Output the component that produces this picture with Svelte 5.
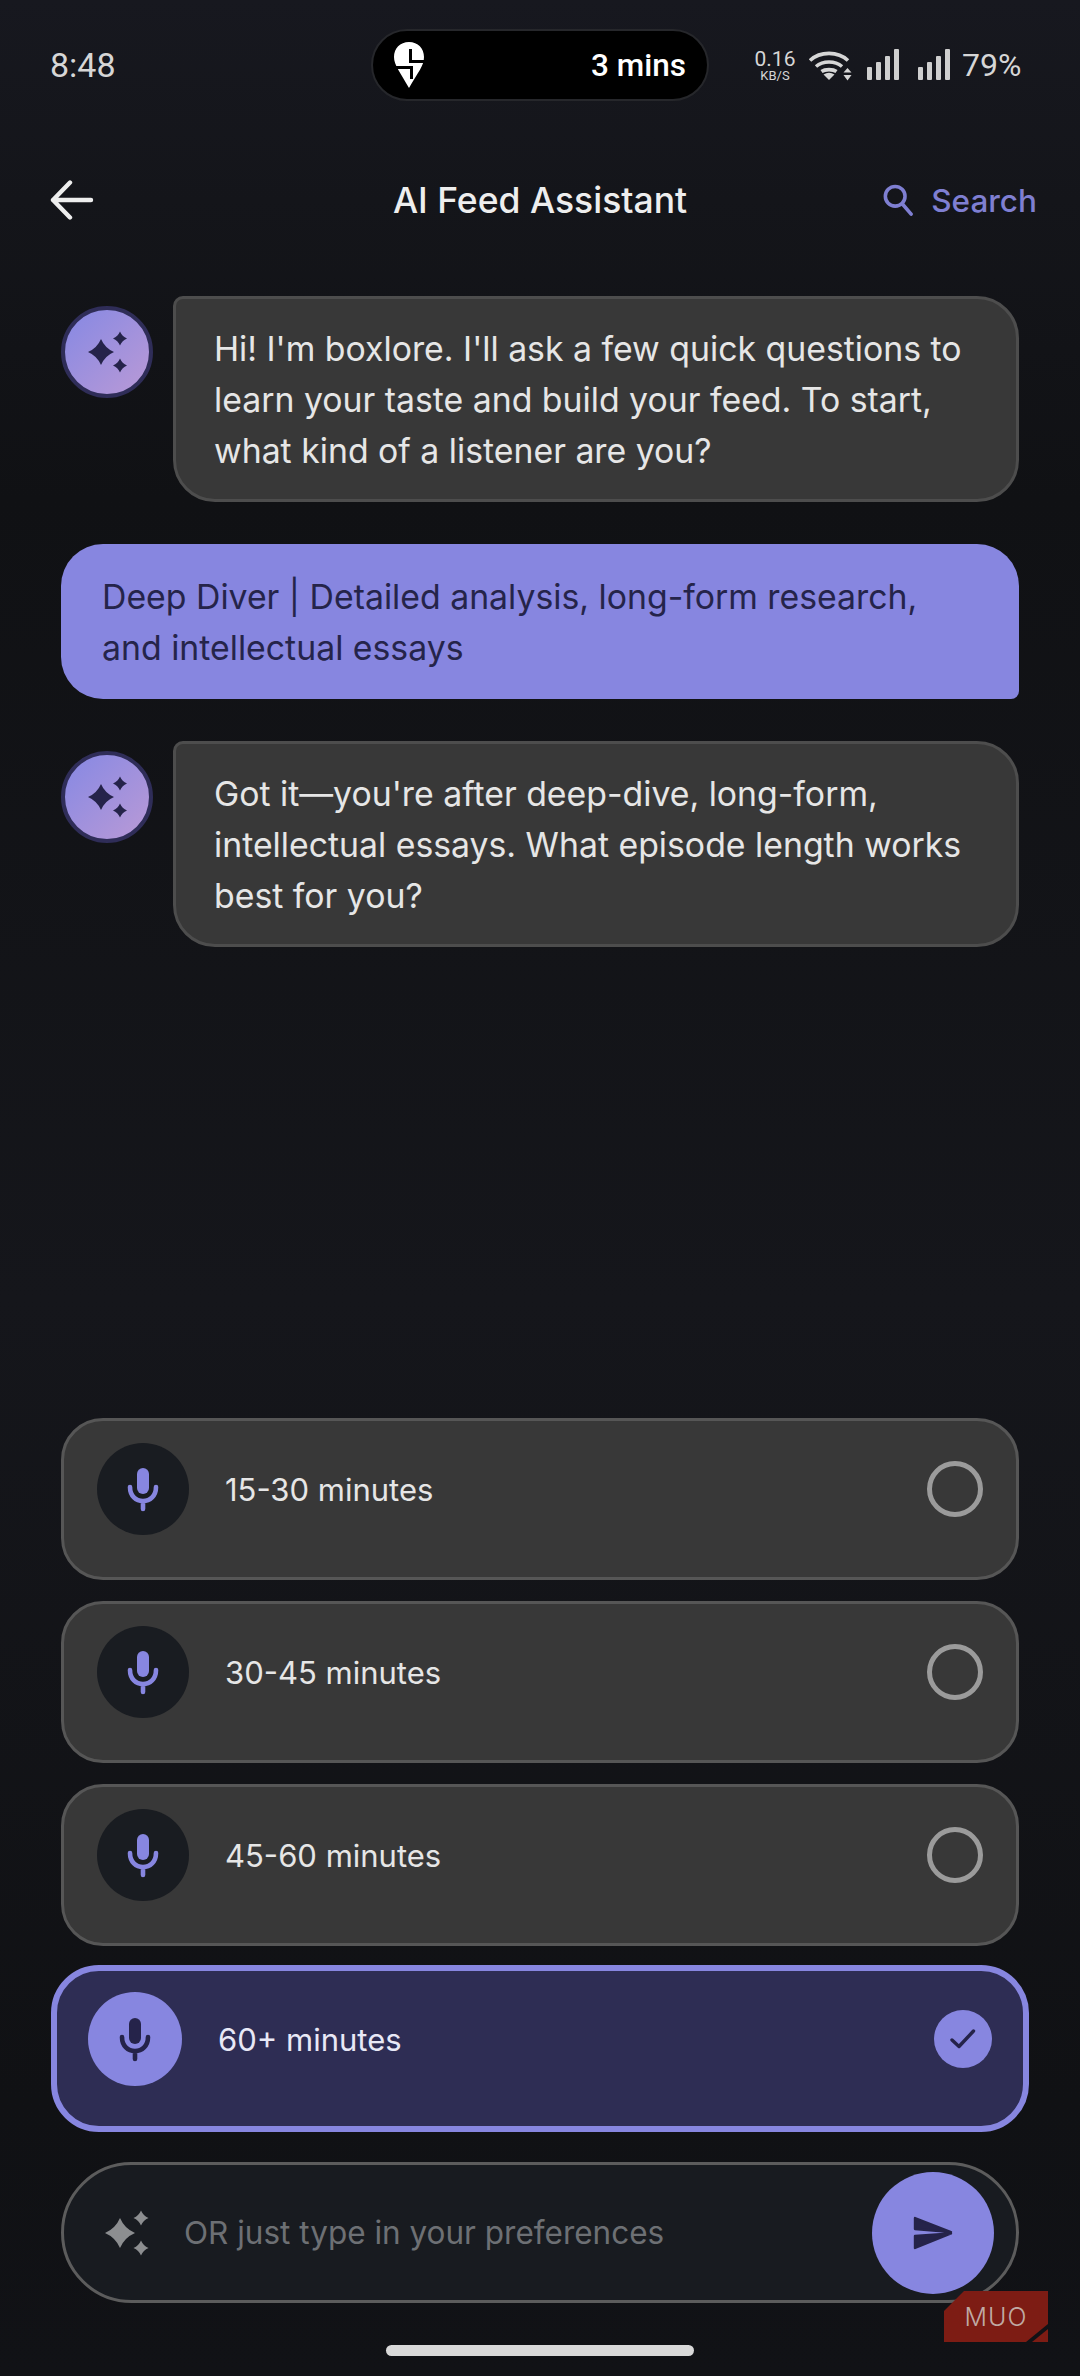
<script>
  const options = ["15-30 minutes", "30-45 minutes", "45-60 minutes", "60+ minutes"];
  let selected = $state(3);

  // four point star, r is the tip distance
  function star(cx, cy, r) {
    const k = r * 0.3;
    return `M${cx} ${cy - r}Q${cx + k} ${cy - k} ${cx + r} ${cy}Q${cx + k} ${cy + k} ${cx} ${cy + r}Q${cx - k} ${cy + k} ${cx - r} ${cy}Q${cx - k} ${cy - k} ${cx} ${cy - r}Z`;
  }
</script>

{#snippet mic()}
  <svg class="mic" viewBox="0 0 48 48" fill="none" stroke="currentColor">
    <rect x="18" y="3" width="12" height="26" rx="6" fill="currentColor" stroke="none" />
    <path d="M11 22C11 31 17 36 24 36S37 31 37 22M24 36V44" stroke-width="4.6" stroke-linecap="round" />
  </svg>
{/snippet}

{#snippet sparkle(size, big)}
  <svg width={size} height={size} viewBox="0 0 60 60" fill="currentColor">
    <path d={star(big, 30, big - 7)} />
    <path d={star(big + 21, 15, 7.5)} />
    <path d={star(big + 21, 45, 7.5)} />
  </svg>
{/snippet}

{#snippet avatar()}
  <div class="avatar">
    <svg width="84" height="84" viewBox="0 0 84 84" fill="#25234a">
      <path d={star(36, 42, 13)} />
      <path d={star(55, 28.5, 7)} />
      <path d={star(55, 55.5, 7)} />
    </svg>
  </div>
{/snippet}

<main class="page">
  <div class="status">
    <span class="time">8:48</span>
    <div class="pill">
      <svg width="32" height="48" viewBox="0 0 32 48">
        <path d="M16 1C7 1 1 7.500 1 16C1 24 7 31 16 47C25 31 31 25 31 16C31 7.500 25 1 16 1Z" fill="#fff" />
        <path d="M17.500 8V20.500H31M0 26.500H18.500V38" fill="none" stroke="#000" stroke-width="3" />
      </svg>
      <span class="eta">3 mins</span>
    </div>
    <div class="net">
      <div class="speed"><span>0.16</span><small>KB/S</small></div>
      <svg class="wifi" width="44" height="32" viewBox="0 0 44 32" fill="none" stroke="#d6d6d6" stroke-width="3.600">
        <path d="M1 11.500C11 2 29 2 39 11.500M7 17.500C14 11.500 26 11.500 33 17.500M12.500 22.500C16 20 24 20 27.500 22.500" />
        <path d="M14.500 25.500L20 31L25.500 25.500Q20 22 14.500 25.500Z" fill="#d6d6d6" stroke="none" />
        <path d="M38.500 19L42.500 23.500H34.500ZM38.500 31.500L42.500 26H34.500Z" fill="#d6d6d6" stroke="none" />
      </svg>
      <svg class="bars" width="32" height="32" viewBox="0 0 32 32" fill="#cfcfcf">
        <rect x="0" y="18" width="5" height="13" rx="1" /><rect x="9" y="13" width="5" height="18" rx="1" />
        <rect x="18" y="7" width="5" height="24" rx="1" /><rect x="27" y="0" width="5" height="31" rx="1" />
      </svg>
      <svg class="bars" width="32" height="32" viewBox="0 0 32 32" fill="#cfcfcf">
        <rect x="0" y="18" width="5" height="13" rx="1" /><rect x="9" y="13" width="5" height="18" rx="1" />
        <rect x="18" y="7" width="5" height="24" rx="1" /><rect x="27" y="0" width="5" height="31" rx="1" />
      </svg>
      <span class="batt">79%</span>
    </div>
  </div>

  <header class="nav">
    <svg width="44" height="40" viewBox="0 0 44 40" fill="none" stroke="#eee" stroke-width="4.400" stroke-linecap="round" stroke-linejoin="round">
      <path d="M20 2.500L3 20L20 37.500M3 20H41" />
    </svg>
    <h1>AI Feed Assistant</h1>
    <div class="search">
      <svg width="30" height="32" viewBox="0 0 32 34" fill="none" stroke="currentColor" stroke-width="3.800" stroke-linecap="round">
        <circle cx="13" cy="13" r="10.500" /><path d="M20.500 21L30 32" />
      </svg>
      <span>Search</span>
    </div>
  </header>

  <section class="chat">
    <div class="bot">
      {@render avatar()}
      <p class="bubble">Hi! I'm boxlore. I'll ask a few quick questions to learn your taste and build your feed. To start, what kind of a listener are you?</p>
    </div>
    <p class="user">Deep Diver | Detailed analysis, long-form research, and intellectual essays</p>
    <div class="bot">
      {@render avatar()}
      <p class="bubble">Got it—you're after deep-dive, long-form, intellectual essays. What episode length works best for you?</p>
    </div>
  </section>

  <section class="options">
    {#each options as label, i}
      <button class="opt" class:on={selected === i} onclick={() => (selected = i)}>
        <span class="micwrap">{@render mic()}</span>
        <span class="label">{label}</span>
        {#if selected === i}
          <span class="tick">
            <svg width="30" height="30" viewBox="0 0 30 30" fill="none" stroke="#25234a" stroke-width="3.400" stroke-linecap="round" stroke-linejoin="round">
              <path d="M4 16L11 22.500L25.500 7" />
            </svg>
          </span>
        {:else}
          <span class="radio"></span>
        {/if}
      </button>
    {/each}
  </section>

  <div class="inputbar">
    <span class="inicon">{@render sparkle(60, 22)}</span>
    <span class="placeholder">OR just type in your preferences</span>
    <button class="send" aria-label="Send">
      <svg width="40" height="34" viewBox="0 0 40 34" fill="#25234a" stroke="#25234a" stroke-width="2.400" stroke-linejoin="round">
        <path d="M2 2L38 16L2 13ZM2 20L38 17.500L2 32Z" />
      </svg>
    </button>
  </div>

  <div class="home"></div>

  <div class="badge"><span>MUO</span></div>
</main>

<style>
  :global(body) {
    margin: 0;
    background: #111216;
  }

  .page {
    position: relative;
    width: 1080px;
    height: 2376px;
    display: flex;
    flex-direction: column;
    overflow: hidden;
    box-sizing: border-box;
    background: linear-gradient(180deg, #17181f 0, #14151a 200px, #101114 500px, #15161b 1300px, #101114 2100px, #111216 100%);
    font-family: Inter, "Noto Sans", sans-serif;
    color: #e6e6e6;
  }

  /* status bar */
  .status {
    height: 72px;
    margin-top: 29px;
    padding-left: 50px;
    display: flex;
    align-items: center;
    font-family: Roboto, sans-serif;
    color: #d6d6d6;
  }

  .time {
    width: 321px;
    font-size: 34px;
  }

  .pill {
    width: 338px;
    height: 72px;
    box-sizing: border-box;
    border: 2px solid #26272b;
    border-radius: 36px;
    background: #000;
    display: flex;
    align-items: center;
    justify-content: space-between;
    padding: 0 21px 0 20px;
  }

  .eta {
    font-size: 31.500px;
    font-weight: 500;
    color: #fff;
  }

  .net {
    margin-left: 44px;
    display: flex;
    align-items: center;
  }

  .speed {
    display: flex;
    flex-direction: column;
    align-items: center;
    width: 44px;
    line-height: 1;
    font-size: 21px;
    margin-right: 12px;
  }

  .speed small {
    font-size: 13px;
    margin-top: -1px;
  }

  .wifi {
    margin-right: 14px;
  }

  .bars {
    margin-right: 19px;
  }

  .bars + .batt {
    margin-left: -7px;
  }

  .batt {
    font-size: 32px;
  }

  /* nav */
  .nav {
    position: relative;
    height: 64px;
    margin-top: 67px;
    padding: 0 43px 0 50px;
    display: flex;
    align-items: center;
    justify-content: space-between;
  }

  .nav h1 {
    position: absolute;
    left: 0;
    right: 0;
    margin: 0;
    text-align: center;
    font-size: 35.500px;
    font-weight: 500;
    color: #eee;
    pointer-events: none;
  }

  .search {
    display: flex;
    align-items: center;
    gap: 18px;
    color: #7f7fd2;
    font-size: 31.500px;
    font-weight: 500;
  }

  /* chat */
  .chat {
    margin-top: 64px;
    padding: 0 61px;
    display: flex;
    flex-direction: column;
    gap: 42px;
  }

  .bot {
    display: flex;
    align-items: flex-start;
    gap: 20px;
  }

  .avatar {
    width: 92px;
    height: 92px;
    margin-top: 10px;
    flex: none;
    box-sizing: border-box;
    border: 4px solid #2f2d58;
    border-radius: 50%;
    background: linear-gradient(135deg, #8b8ae2 10%, #b297d8 85%);
    display: flex;
    align-items: center;
    justify-content: center;
  }

  .bubble {
    flex: 1;
    margin: 0;
    padding: 24px 40px 23px 38px;
    border: 3px solid #4d4d4d;
    border-radius: 10px 42px 42px 42px;
    background: #383838;
    font-size: 33.800px;
    line-height: 51px;
    box-sizing: border-box;
    height: 206px;
  }

  .user {
    margin: 0;
    height: 155px;
    box-sizing: border-box;
    padding: 27px 80px 25px 41px;
    border-radius: 42px 42px 8px 42px;
    background: #8786e0;
    color: #25244a;
    font-size: 33.800px;
    line-height: 51px;
  }

  /* options */
  .options {
    margin-top: 471px;
    padding: 0 61px;
    display: flex;
    flex-direction: column;
    gap: 21px;
  }

  .opt {
    position: relative;
    height: 162px;
    box-sizing: border-box;
    border: 3px solid #565656;
    border-radius: 42px;
    background: #383838;
    padding: 23px 33px 43px;
    display: flex;
    align-items: center;
    font: inherit;
    color: #e6e6e6;
    text-align: left;
    cursor: pointer;
  }

  .opt.on {
    height: 167px;
    margin: -2px -10px -3px;
    border: 6px solid #8786e0;
    border-radius: 48px;
    background: #2e2d54;
    color: #e8e8f6;
    padding: 21px 31px 40px;
  }

  .micwrap {
    width: 92px;
    height: 92px;
    flex: none;
    border-radius: 50%;
    background: #191c21;
    color: #8786e0;
    display: flex;
    align-items: center;
    justify-content: center;
  }

  .on .micwrap {
    width: 94px;
    height: 94px;
    background: #8786e0;
    color: #25234a;
  }

  .mic {
    width: 48px;
    height: 48px;
  }

  .label {
    flex: 1;
    margin-left: 36px;
    font-size: 31px;
  }

  .radio {
    width: 56px;
    height: 56px;
    box-sizing: border-box;
    border: 5px solid #9b9b9b;
    border-radius: 50%;
  }

  .tick {
    width: 58px;
    height: 58px;
    border-radius: 50%;
    background: #8786e0;
    display: flex;
    align-items: center;
    justify-content: center;
  }

  /* input */
  .inputbar {
    height: 141px;
    margin: 33px 61px 0;
    box-sizing: border-box;
    border: 3px solid #5c5c5c;
    border-radius: 71px;
    background: #181b20;
    padding: 0 22px 0 34px;
    display: flex;
    align-items: center;
  }

  .inicon {
    display: flex;
    color: #8c8e90;
  }

  .placeholder {
    flex: 1;
    margin-left: 26px;
    font-size: 31.500px;
    color: #6d7074;
  }

  .send {
    width: 122px;
    height: 122px;
    padding: 0;
    border: 0;
    border-radius: 50%;
    background: #8786e0;
    display: flex;
    align-items: center;
    justify-content: center;
  }

  .home {
    width: 308px;
    height: 11px;
    margin: 42px auto 0;
    border-radius: 6px;
    background: #d9d9d9;
  }

  /* watermark sits over the input bar corner */
  .badge {
    position: absolute;
    left: 944px;
    top: 2291px;
    width: 104px;
    height: 51px;
    background: #7d1c14;
    clip-path: polygon(20px 0, 100% 0, 100% 100%, 0 100%, 0 20px);
    display: flex;
    align-items: center;
    justify-content: center;
    color: #c0aaa4;
    font-family: Inter, sans-serif;
    font-weight: 300;
    font-size: 25px;
    letter-spacing: 1px;
  }

  .badge::after {
    content: "";
    position: absolute;
    inset: 0;
    background: #111216;
    clip-path: polygon(82px 51px, 104px 33px, 104px 38px, 88px 51px);
  }
</style>
